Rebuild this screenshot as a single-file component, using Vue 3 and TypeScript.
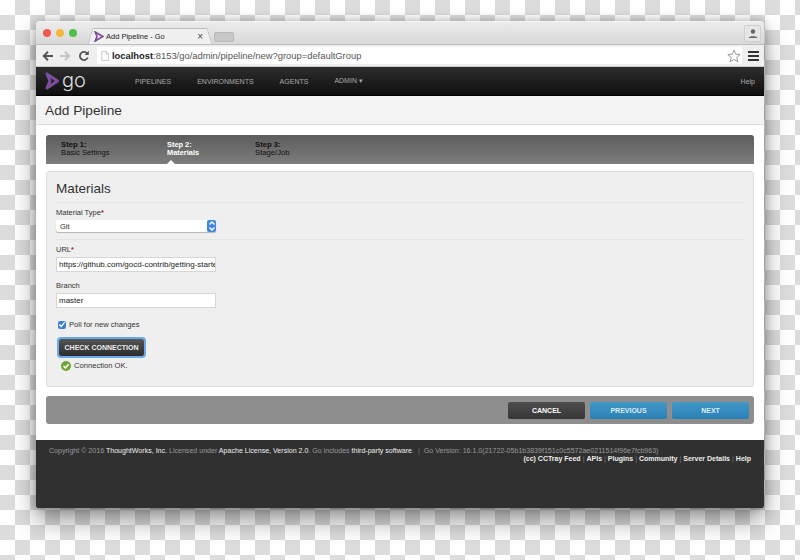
<script setup lang="ts">
const navItems = ['PIPELINES', 'ENVIRONMENTS', 'AGENTS']
const steps = [
  { num: 'Step 1:', name: 'Basic Settings', cls: 's1' },
  { num: 'Step 2:', name: 'Materials', cls: 's2 active' },
  { num: 'Step 3:', name: 'Stage/Job', cls: 's3' },
]
const footerLinks = ['(cc) CCTray Feed', 'APIs', 'Plugins', 'Community', 'Server Details', 'Help']
</script>

<template>
  <div class="page">
    <div class="window">
      <div class="titlebar">
        <div class="lights">
          <span class="light red"></span>
          <span class="light yellow"></span>
          <span class="light green"></span>
        </div>
        <div class="tab">
          <svg class="tab-logo" width="10" height="11" viewBox="0 0 10 11">
            <path d="M1.2 1 L8.8 5.5 L1.2 10 L3 5.5 Z" fill="none" stroke="#7a4d96" stroke-width="1.7" />
          </svg>
          <span class="tab-title">Add Pipeline - Go</span>
          <span class="tab-close">×</span>
        </div>
        <div class="tab-new"></div>
        <div class="user-btn">
          <svg width="12" height="12" viewBox="0 0 12 12">
            <circle cx="6" cy="3.5" r="2.2" fill="#666" />
            <path d="M1.5 10 C2 7.5 10 7.5 10.5 10 Z" fill="#666" />
          </svg>
        </div>
      </div>

      <div class="toolbar">
        <svg class="nav-ico" width="12" height="12" viewBox="0 0 12 12">
          <path d="M11 6 H2 M6 1.8 L1.8 6 L6 10.2" fill="none" stroke="#555" stroke-width="2" />
        </svg>
        <svg class="nav-ico" width="12" height="12" viewBox="0 0 12 12">
          <path d="M1 6 H10 M6 1.8 L10.2 6 L6 10.2" fill="none" stroke="#c4c4c4" stroke-width="2" />
        </svg>
        <svg class="nav-ico reload" width="12" height="12" viewBox="0 0 12 12">
          <path d="M9.8 7.5 A4.1 4.1 0 1 1 9.4 3.6" fill="none" stroke="#555" stroke-width="1.8" />
          <path d="M10.8 0.8 V5 H6.6 Z" fill="#555" />
        </svg>
        <div class="omnibox">
          <svg class="page-ico" width="8" height="10" viewBox="0 0 10 12">
            <path d="M1 .5 H6.5 L9.5 3.5 V11.5 H1 Z M6.5 .5 V3.5 H9.5" fill="#fff" stroke="#bbb" />
          </svg>
          <span class="url"><b>localhost</b>:8153/go/admin/pipeline/new?group=defaultGroup</span>
          <svg class="star" width="14" height="14" viewBox="0 0 14 14">
            <path d="M7 1 L8.7 5.2 L13.2 5.5 L9.7 8.4 L10.9 12.8 L7 10.4 L3.1 12.8 L4.3 8.4 L.8 5.5 L5.3 5.2 Z" fill="#fff" stroke="#999" />
          </svg>
        </div>
        <div class="menu-btn"><i></i><i></i><i></i></div>
      </div>

      <div class="topnav">
        <div class="logo">
          <svg width="15" height="18" viewBox="0 0 15 18">
            <path d="M2 2 L12.5 9 L2 16 L5 9 Z" fill="none" stroke="#7b4f9e" stroke-width="3" stroke-linejoin="round" />
          </svg>
          <span class="logo-text">go</span>
        </div>
        <a v-for="item in navItems" :key="item" class="nav-link">{{ item }}</a>
        <a class="nav-link">ADMIN <span class="caret">▾</span></a>
        <a class="nav-help">Help</a>
      </div>

      <div class="page-title">Add Pipeline</div>

      <div class="content">
        <div class="stepper">
          <div v-for="s in steps" :key="s.num" class="step" :class="s.cls">
            <b>{{ s.num }}</b>
            <span>{{ s.name }}</span>
          </div>
        </div>

        <div class="panel">
          <h2>Materials</h2>
          <div class="field rule">
            <label>Material Type<em>*</em></label>
            <div class="select">
              <span>Git</span>
              <span class="select-arrows">
                <svg width="8" height="12" viewBox="0 0 8 12">
                  <path d="M1.5 4.5 L4 2 L6.5 4.5 M1.5 7.5 L4 10 L6.5 7.5" fill="none" stroke="#fff" stroke-width="1.3" />
                </svg>
              </span>
            </div>
          </div>
          <div class="field url-field">
            <label>URL<em>*</em></label>
            <div class="input">https://github.com/gocd-contrib/getting-started</div>
          </div>
          <div class="field branch-field">
            <label>Branch</label>
            <div class="input">master</div>
          </div>
          <div class="poll">
            <span class="checkbox">
              <svg width="9" height="9" viewBox="0 0 9 9">
                <path d="M1.5 4.5 L3.6 6.8 L7.5 1.8" fill="none" stroke="#fff" stroke-width="1.5" />
              </svg>
            </span>
            Poll for new changes
          </div>
          <button class="check-btn">CHECK CONNECTION</button>
          <div class="conn-ok">
            <svg width="10" height="10" viewBox="0 0 10 10">
              <circle cx="5" cy="5" r="5" fill="#6fa53a" />
              <path d="M2.5 5 L4.4 7 L7.6 3.2" fill="none" stroke="#fff" stroke-width="1.5" />
            </svg>
            Connection OK.
          </div>
        </div>

        <div class="actions">
          <button class="act dark">CANCEL</button>
          <button class="act blue">PREVIOUS</button>
          <button class="act blue">NEXT</button>
        </div>
      </div>

      <div class="footer">
        <div class="foot-line">
          Copyright © 2016 <b>ThoughtWorks, Inc.</b> Licensed under <b>Apache License, Version 2.0</b>. Go includes <b>third-party software</b>.
          <span class="sep">|</span> Go Version: 16.1.0(21722-05b1b3839f151c0c5572ae0211514f96e7fcb963)
        </div>
        <div class="foot-links">
          <template v-for="(l, i) in footerLinks" :key="l">
            <span v-if="i > 0" class="sep">|</span>
            <b>{{ l }}</b>
          </template>
        </div>
      </div>
    </div>
  </div>
</template>

<style>
html, body {
  margin: 0;
  overflow: hidden;
}
</style>

<style scoped>
.page {
  width: 800px;
  height: 560px;
  padding: 21px 36px 0;
  box-sizing: border-box;
  overflow: hidden;
  background: conic-gradient(#dcdcdc 25%, #fff 0 50%, #dcdcdc 0 75%, #fff 0) 0 0 / 30px 30px;
  font-family: "Liberation Sans", Arial, sans-serif;
}

.window {
  width: 728px;
  height: 487px;
  display: flex;
  flex-direction: column;
  border-radius: 4px 4px 2px 2px;
  overflow: hidden;
  background: #fff;
  box-shadow: 0 12px 24px rgba(0, 0, 0, 0.42), 0 0 8px rgba(0, 0, 0, 0.25);
}

/* browser chrome */
.titlebar {
  height: 23px;
  flex: none;
  display: flex;
  align-items: flex-end;
  background: linear-gradient(#ececec, #d8d8d8);
  border-top: 1px solid #f4f4f4;
  box-sizing: border-box;
}
.lights { display: flex; gap: 5px; padding: 0 0 7px 7px; width: 52px; flex: none; box-sizing: border-box; }
.light { width: 8px; height: 8px; border-radius: 50%; }
.red { background: #ee5a52; }
.yellow { background: #f5b83a; }
.green { background: #4fc04c; }
.tab {
  position: relative;
  isolation: isolate;
  width: 124px;
  height: 16px;
  flex: none;
  display: flex;
  align-items: center;
  padding: 0 6px;
  box-sizing: border-box;
}
.tab::before,
.tab::after {
  content: '';
  position: absolute;
  top: 0;
  bottom: 0;
  width: 60%;
  z-index: -1;
  background: #f0f0f0;
  border-top: 1px solid #bdbdbd;
}
.tab::before {
  left: 2px;
  transform: skewX(-16deg);
  border-left: 1px solid #bdbdbd;
  border-radius: 2px 0 0 0;
}
.tab::after {
  right: 2px;
  transform: skewX(16deg);
  border-right: 1px solid #bdbdbd;
  border-radius: 0 2px 0 0;
}
.tab-logo { flex: none; }
.tab-title { font-size: 7.5px; color: #222; margin-left: 2px; flex: 1; white-space: nowrap; }
.tab-close { font-size: 10px; color: #444; margin-right: 3px; }
.tab-new {
  width: 20px;
  height: 10px;
  margin: 0 0 2px 2px;
  background: #c8c8c8;
  border: 1px solid #b8b8b8;
  border-radius: 2px;
  box-sizing: border-box;
}
.user-btn {
  margin: 0 3px 2px auto;
  width: 17px;
  height: 17px;
  display: flex;
  align-items: center;
  justify-content: center;
  background: #e6e6e6;
  border: 1px solid #cfcfcf;
  border-radius: 2px;
  box-sizing: border-box;
}
.toolbar {
  height: 23px;
  flex: none;
  display: flex;
  align-items: center;
  gap: 4px;
  padding-left: 6px;
  box-sizing: border-box;
  background: #efefef;
  border-top: 1px solid #bdbdbd;
  border-bottom: 1px solid #c9c9c9;
}
.nav-ico { flex: none; margin-right: 1px; }
.reload { margin-left: 2px; }
.omnibox {
  width: 645px;
  height: 17px;
  margin-left: 2px;
  flex: none;
  display: flex;
  align-items: center;
  background: #fff;
  padding: 0 1px 0 4px;
  box-sizing: border-box;
}
.page-ico { flex: none; }
.url { font-size: 9.4px; color: #555; margin-left: 3px; flex: 1; white-space: nowrap; }
.url b { color: #222; }
.star { flex: none; }
.menu-btn {
  margin-left: 2px;
  display: flex;
  flex-direction: column;
  gap: 2px;
}
.menu-btn i { display: block; width: 11px; height: 2px; background: #333; }

/* go nav */
.topnav {
  height: 29px;
  flex: none;
  display: flex;
  align-items: center;
  background: linear-gradient(#2d2d2d, #0f0f0f);
  border-bottom: 1px solid #000;
  box-sizing: border-box;
}
.logo { width: 99px; flex: none; display: flex; align-items: center; padding-left: 9px; box-sizing: border-box; }
.logo-text { font-size: 20px; font-weight: 300; color: #ddd; margin: -3px 0 0 2px; line-height: 1; font-family: Inter, "Liberation Sans", sans-serif; }
.nav-link { font-size: 7px; color: #aaa; margin-right: 26px; white-space: nowrap; }
.caret { font-size: 7px; }
.nav-help { margin-left: auto; margin-right: 9px; font-size: 7px; color: #aaa; }

.page-title {
  height: 29px;
  flex: none;
  display: flex;
  align-items: center;
  padding-left: 9px;
  box-sizing: border-box;
  font-size: 13.7px;
  color: #333;
  background: #f3f3f3;
  border-bottom: 1px solid #ddd;
}

.content {
  flex: 1;
  padding: 10px 10px 0;
  display: flex;
  flex-direction: column;
  background: #fff;
}

.stepper {
  height: 29px;
  flex: none;
  display: flex;
  border-radius: 3px 3px 0 0;
  background: linear-gradient(#5d5d5d, #7d7d7d);
  font-size: 7.7px;
  color: #111;
}
.step { position: relative; display: flex; flex-direction: column; padding-top: 6px; line-height: 8px; box-sizing: border-box; white-space: nowrap; }
.s1 { width: 121px; padding-left: 15px; }
.s2 { width: 88px; }
.step.active { color: #fff; font-weight: bold; font-size: 7.4px; }
.step.active::after {
  content: '';
  position: absolute;
  left: 0;
  bottom: 0;
  border: 4px solid transparent;
  border-top: none;
  border-bottom-color: #fff;
}

.panel {
  height: 216px;
  flex: none;
  margin-top: 7px;
  padding: 8px 9px 0;
  box-sizing: border-box;
  background: #efefef;
  border: 1px solid #ddd;
  border-radius: 3px;
  color: #333;
}
.panel h2 {
  margin: 0;
  height: 22px;
  font-size: 13.5px;
  font-weight: normal;
  line-height: 18px;
  color: #333;
  border-bottom: 1px solid #e4e4e4;
  box-sizing: content-box;
}
.field label { display: block; font-size: 7.5px; line-height: 9px; color: #333; }
.field em { color: #b3142a; font-style: normal; font-weight: bold; }
.rule { padding: 5px 0 7px; border-bottom: 1px solid #e4e4e4; }
.select {
  width: 160px;
  height: 12px;
  margin-top: 3px;
  display: flex;
  justify-content: space-between;
  align-items: center;
  padding-left: 4px;
  box-sizing: border-box;
  font-size: 7.5px;
  background: #fff;
  border-radius: 2px;
  box-shadow: 0 1px 1px rgba(0, 0, 0, 0.25);
}
.select-arrows {
  width: 9px;
  height: 12px;
  display: flex;
  align-items: center;
  justify-content: center;
  background: #3f86dc;
  border-radius: 2px;
}
.url-field { margin-top: 5px; }
.branch-field { margin-top: 9px; }
.input {
  width: 160px;
  height: 15px;
  margin-top: 3px;
  line-height: 14px;
  padding-left: 2px;
  box-sizing: border-box;
  overflow: hidden;
  white-space: nowrap;
  font-size: 8px;
  color: #222;
  background: #fff;
  border: 1px solid #d6d6d6;
}
.poll {
  display: flex;
  align-items: center;
  gap: 3px;
  margin: 12px 0 0 2px;
  height: 9px;
  font-size: 7.6px;
}
.checkbox {
  width: 8px;
  height: 8px;
  display: flex;
  align-items: center;
  justify-content: center;
  background: #3f7fd0;
  border-radius: 2px;
}
.check-btn {
  display: block;
  width: 85px;
  height: 17px;
  margin: 10px 0 0 3px;
  padding: 0;
  font-family: inherit;
  font-size: 7px;
  font-weight: bold;
  color: #eee;
  background: linear-gradient(#555, #2c2c2c);
  border: none;
  border-radius: 2px;
  box-shadow: 0 0 0 2px #6aa9ea;
}
.conn-ok {
  display: flex;
  align-items: center;
  gap: 3px;
  margin: 5px 0 0 5px;
  font-size: 7.6px;
  line-height: 10px;
}

.actions {
  height: 28px;
  flex: none;
  margin-top: 9px;
  display: flex;
  justify-content: flex-end;
  align-items: center;
  gap: 5px;
  padding-right: 5px;
  background: #8e8e8e;
  border-radius: 3px;
}
.act {
  width: 77px;
  height: 17px;
  padding: 0;
  font-family: inherit;
  font-size: 7px;
  font-weight: bold;
  color: #fff;
  border: none;
  border-radius: 2px;
}
.dark { background: linear-gradient(#4d4d4d, #363636); }
.blue { background: linear-gradient(#4298c8, #2a80b4); color: #dcecf6; }

.footer {
  height: 68px;
  flex: none;
  padding: 7px 13px 0;
  box-sizing: border-box;
  background: #303030;
  font-size: 7px;
  line-height: 8px;
  color: #999;
  white-space: nowrap;
}
.foot-line { font-size: 7.07px; }
.foot-line b { color: #eee; font-weight: normal; }
.foot-links b { color: #eee; font-weight: bold; }
.foot-links { text-align: right; }
.sep { color: #777; margin: 0 2px; }
</style>
